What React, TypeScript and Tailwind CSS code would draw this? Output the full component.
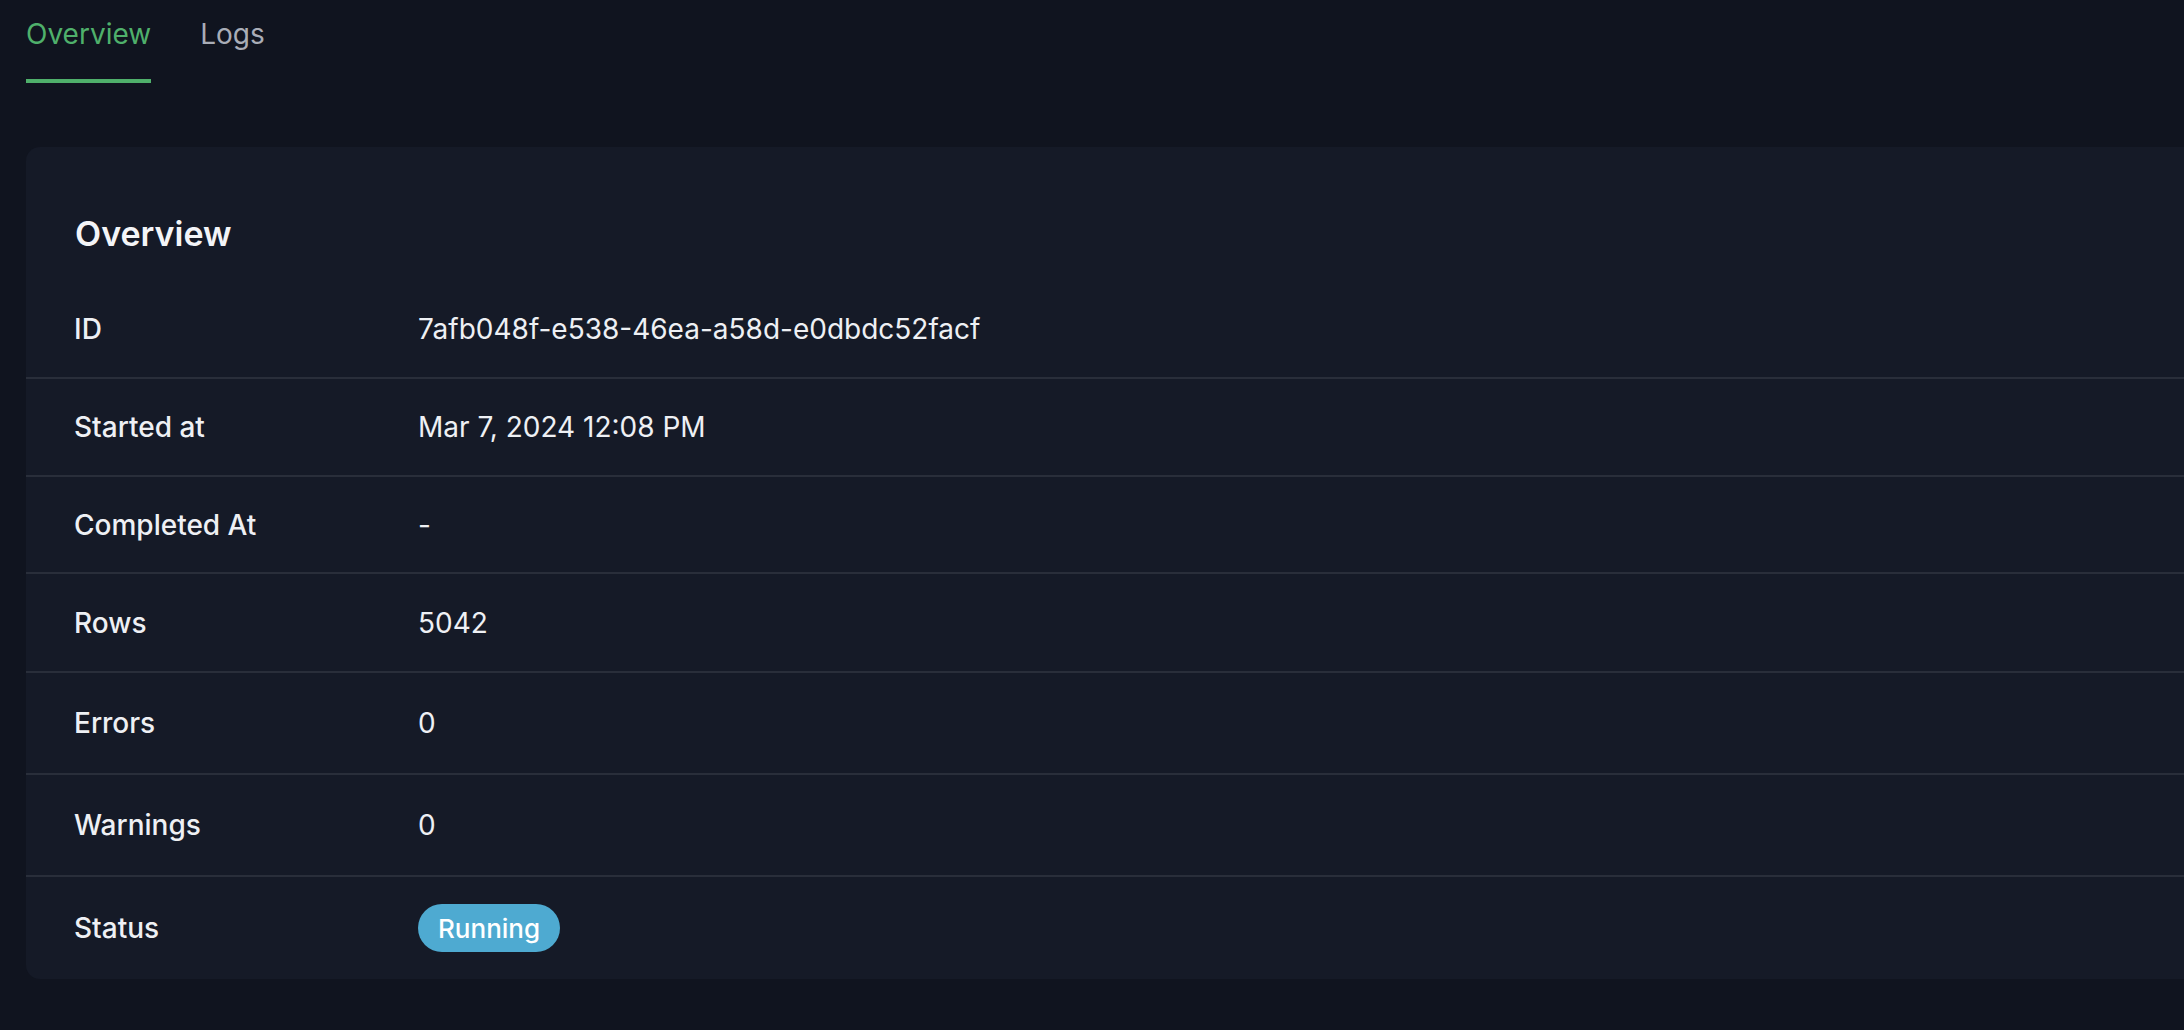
import React, { useState } from 'react';

interface Row {
  label: string;
  value: string;
  height: string;
  status?: boolean;
}

const rows: Row[] = [
  { label: 'ID', value: '7afb048f-e538-46ea-a58d-e0dbdc52facf', height: 'h-[98px]' },
  { label: 'Started at', value: 'Mar 7, 2024 12:08 PM', height: 'h-[98px]' },
  { label: 'Completed At', value: '-', height: 'h-[97px]' },
  { label: 'Rows', value: '5042', height: 'h-[99px]' },
  { label: 'Errors', value: '0', height: 'h-[102px]' },
  { label: 'Warnings', value: '0', height: 'h-[102px]' },
  { label: 'Status', value: 'Running', height: 'h-[102px]', status: true },
];

const App: React.FC = () => {
  const [tab, setTab] = useState<'overview' | 'logs'>('overview');

  return (
    <div
      className="w-[2184px] h-[1030px] overflow-hidden bg-[#10141f] text-[#eef0f4]"
      style={{ fontFamily: 'Inter, "Noto Sans", sans-serif' }}
    >
      {/* Tabs */}
      <div className="flex gap-[49px] pl-[26px]">
        <button
          onClick={() => setTab('overview')}
          className={`pt-[13px] pb-[24px] text-[28px] leading-[42px] border-b-4 ${
            tab === 'overview' ? 'text-[#4fb06b] border-[#4fb06b]' : 'text-[#a9adb7] border-transparent'
          }`}
        >
          Overview
        </button>
        <button
          onClick={() => setTab('logs')}
          className={`pt-[13px] pb-[24px] text-[28px] leading-[42px] border-b-4 ${
            tab === 'logs' ? 'text-[#4fb06b] border-[#4fb06b]' : 'text-[#a9adb7] border-transparent'
          }`}
        >
          Logs
        </button>
      </div>

      {/* Overview card */}
      <div className="mt-[64px] ml-[26px] w-[2220px] rounded-l-[14px] bg-[#151a27] pt-[62px]">
        <h2 className="pl-[49px] mb-[23px] text-[34px] leading-[49px] font-semibold text-[#f3f4f7]">
          Overview
        </h2>
        <div>
          {rows.map((row, i) => (
            <div
              key={row.label}
              className={`flex items-center ${row.height} ${
                i < rows.length - 1 ? 'border-b-2 border-[#292e3a]' : ''
              }`}
            >
              <div className="w-[392px] pl-[48px] text-[28px] font-medium text-[#eef0f4]">{row.label}</div>
              {row.status ? (
                <span className="inline-flex items-center h-[48px] px-[20px] rounded-full bg-[#4eaad1] text-[26px] font-medium text-white">
                  {row.value}
                </span>
              ) : (
                <div className="text-[28px] text-[#eef0f4]">{row.value}</div>
              )}
            </div>
          ))}
        </div>
      </div>
    </div>
  );
};

export default App;
